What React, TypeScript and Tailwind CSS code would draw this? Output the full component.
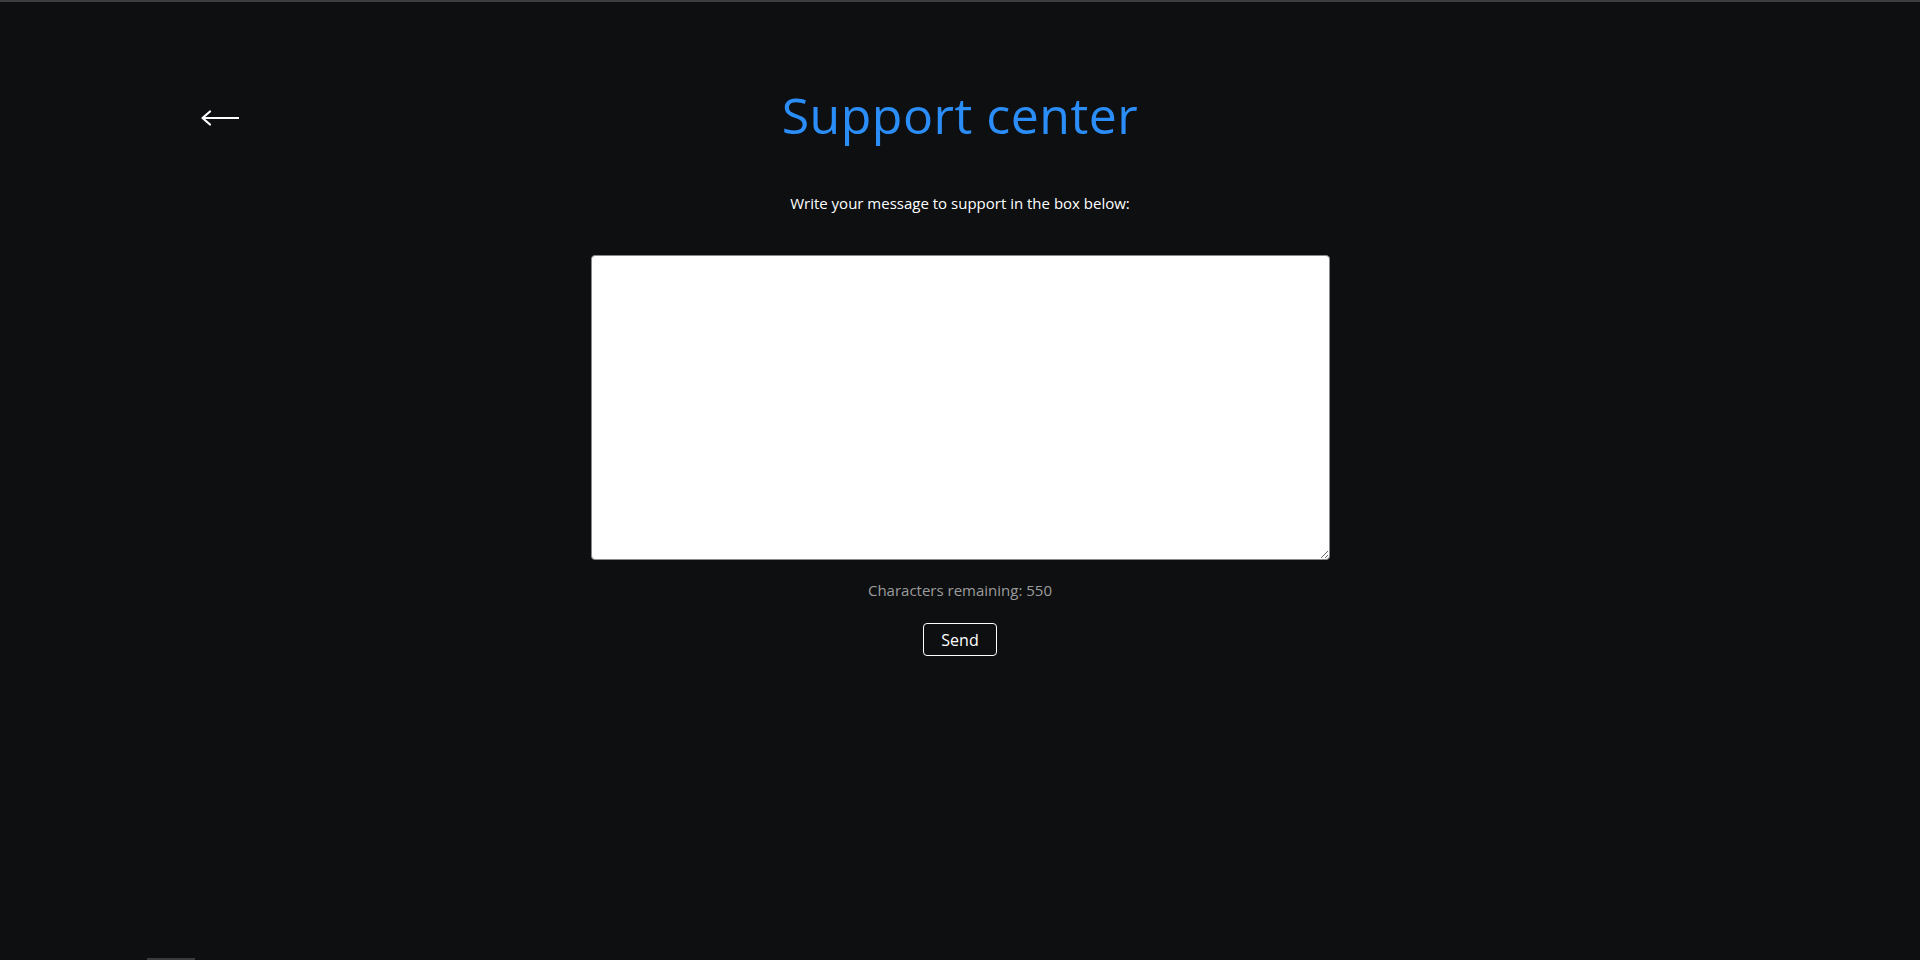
import { useState } from "react";

const MAX_CHARS = 550;

export default function App() {
  const [message, setMessage] = useState("");
  const remaining = MAX_CHARS - message.length;

  return (
    <div
      className="flex h-[960px] flex-col overflow-hidden bg-[#0e0f11] text-white"
      style={{ fontFamily: '"Open Sans", "Noto Sans", sans-serif' }}
    >
      <div className="h-[2px] w-full bg-[#3d3e40]" />

      <header className="grid grid-cols-[1fr_auto_1fr] items-center px-[200px] pt-[83px]">
        <button className="mt-[5px] flex h-[20px] w-[40px] items-center justify-start text-white" aria-label="Back">
          <svg viewBox="0 0 40 16" className="h-[16px] w-[40px]" fill="none" stroke="currentColor" strokeWidth="2.2">
            <path d="M2 8h37" />
            <path d="M10 1.5L2.5 8l7.5 6.5" strokeLinecap="round" strokeLinejoin="round" />
          </svg>
        </button>
        <h1 className="text-[50px] leading-[60px] font-normal tracking-[0.5px] text-[#2b8ef8]">Support center</h1>
        <div />
      </header>

      <p className="mt-[47px] text-center text-[15px] leading-[22px] font-medium text-white">
        Write your message to support in the box below:
      </p>

      <div className="mt-[41px] flex justify-center">
        <textarea
          value={message}
          maxLength={MAX_CHARS}
          onChange={(e) => setMessage(e.target.value)}
          className="h-[305px] w-[739px] rounded-[4px] border border-[#8a8a8a] bg-white p-2 text-[15px] text-black outline-none"
        />
      </div>

      <p className="mt-[19px] text-center text-[15px] leading-[22px] text-[#9c9c9c]">
        Characters remaining: {remaining}
      </p>

      <div className="mt-[22px] flex justify-center">
        <button className="h-[33px] w-[74px] rounded-[4px] border border-white text-[16px] leading-none text-white">
          Send
        </button>
      </div>

      <div className="flex-1" />
      <div className="ml-[147px] h-[2px] w-[48px] bg-[#3a3b3d]" />
    </div>
  );
}
